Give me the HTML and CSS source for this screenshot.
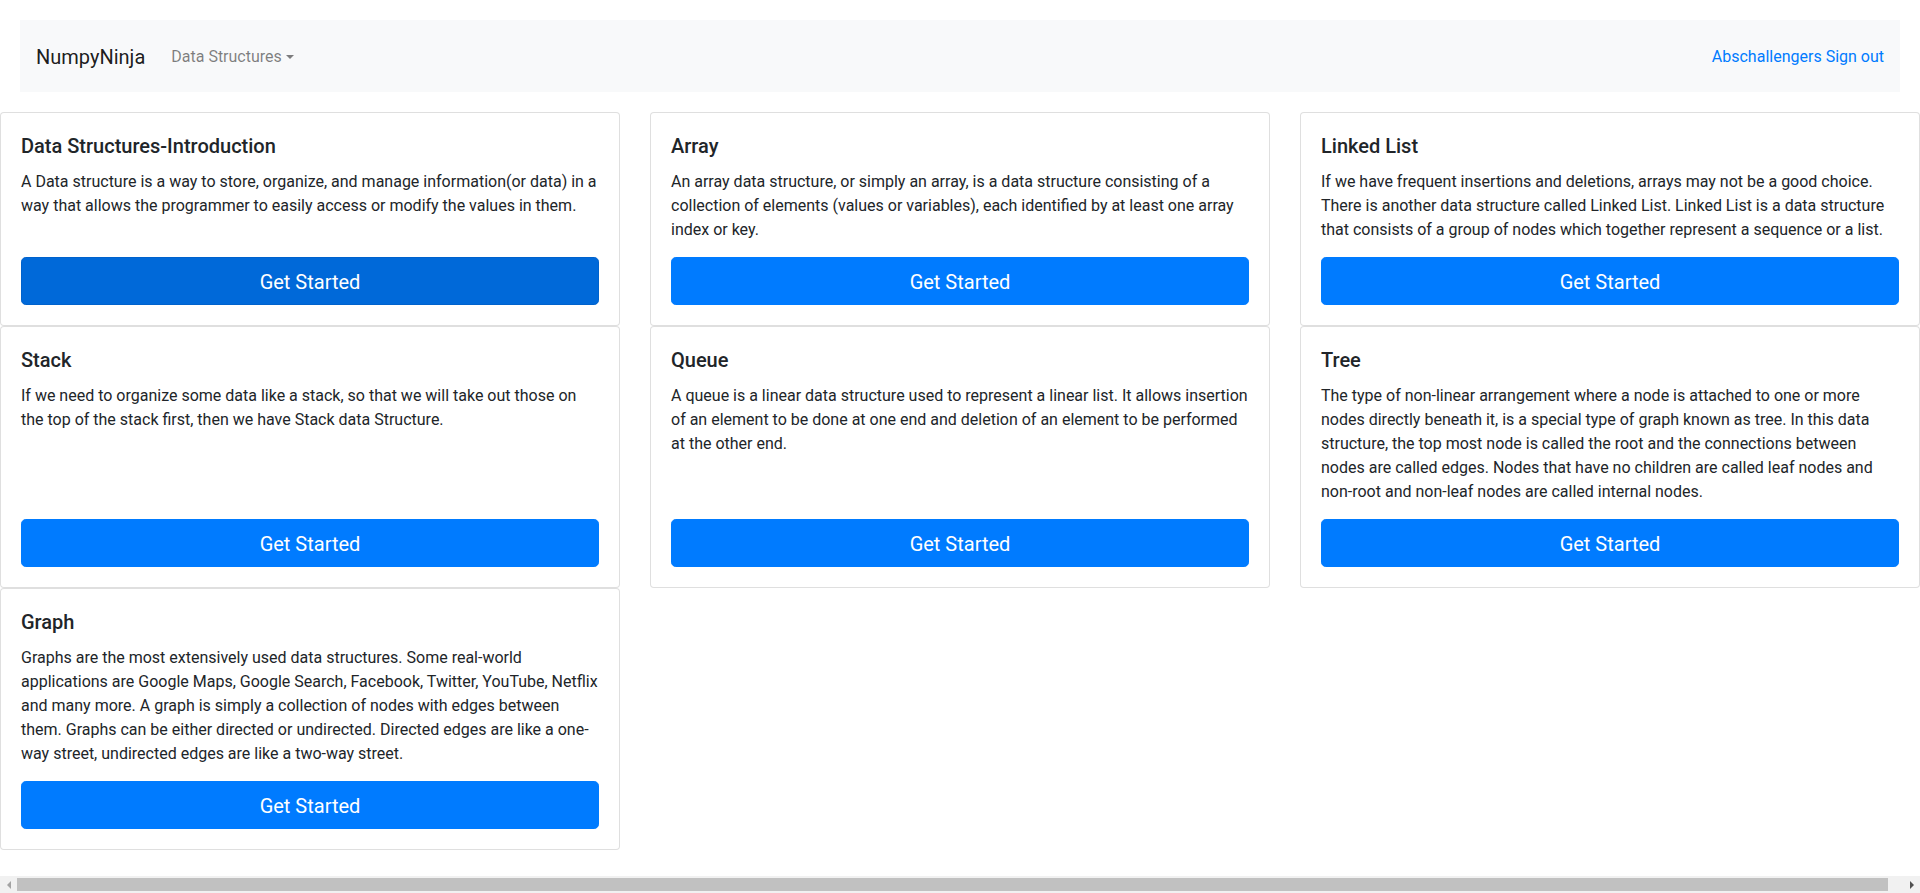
FILE: index.html
```html
<!DOCTYPE html>
<html lang="en">
<head>
<meta charset="utf-8">
<title>NumpyNinja</title>
<link rel="stylesheet" href="styles.css">
</head>
<body>
<nav class="navbar">
  <a class="brand" href="#">NumpyNinja</a>
  <a class="nav-link dropdown-toggle" href="#">Data Structures</a>
  <div class="nav-right">
    <a class="user-link" href="#">Abschallengers</a>
    <a class="user-link" href="#">Sign out</a>
  </div>
</nav>

<main class="cards">
  <div class="card">
    <div class="card-body">
      <h5 class="card-title">Data Structures-Introduction</h5>
      <p class="card-text">A Data structure is a way to store, organize, and manage information(or data) in a way that allows the programmer to easily access or modify the values in them.</p>
      <a href="#" class="btn btn-hover">Get Started</a>
    </div>
  </div>
  <div class="card">
    <div class="card-body">
      <h5 class="card-title">Array</h5>
      <p class="card-text">An array data structure, or simply an array, is a data structure consisting of a collection of elements (values or variables), each identified by at least one array index or key.</p>
      <a href="#" class="btn">Get Started</a>
    </div>
  </div>
  <div class="card">
    <div class="card-body">
      <h5 class="card-title">Linked List</h5>
      <p class="card-text">If we have frequent insertions and deletions, arrays may not be a good choice. There is another data structure called Linked List. Linked List is a data structure that consists of a group of nodes which together represent a sequence or a list.</p>
      <a href="#" class="btn">Get Started</a>
    </div>
  </div>
  <div class="card">
    <div class="card-body">
      <h5 class="card-title">Stack</h5>
      <p class="card-text">If we need to organize some data like a stack, so that we will take out those on the top of the stack first, then we have Stack data Structure.</p>
      <a href="#" class="btn">Get Started</a>
    </div>
  </div>
  <div class="card">
    <div class="card-body">
      <h5 class="card-title">Queue</h5>
      <p class="card-text">A queue is a linear data structure used to represent a linear list. It allows insertion of an element to be done at one end and deletion of an element to be performed at the other end.</p>
      <a href="#" class="btn">Get Started</a>
    </div>
  </div>
  <div class="card">
    <div class="card-body">
      <h5 class="card-title">Tree</h5>
      <p class="card-text">The type of non-linear arrangement where a node is attached to one or more nodes directly beneath it, is a special type of graph known as tree. In this data structure, the top most node is called the root and the connections between nodes are called edges. Nodes that have no children are called leaf nodes and non-root and non-leaf nodes are called internal nodes.</p>
      <a href="#" class="btn">Get Started</a>
    </div>
  </div>
  <div class="card">
    <div class="card-body">
      <h5 class="card-title">Graph</h5>
      <p class="card-text">Graphs are the most extensively used data structures. Some real-world applications are Google Maps, Google Search, Facebook, Twitter, YouTube, Netflix and many more. A graph is simply a collection of nodes with edges between them. Graphs can be either directed or undirected. Directed edges are like a one-way street, undirected edges are like a two-way street.</p>
      <a href="#" class="btn">Get Started</a>
    </div>
  </div>
</main>

<div class="scrollbar" aria-hidden="true">
  <div class="sb-btn"><span class="arrow-left"></span></div>
  <div class="sb-track"><div class="sb-thumb"></div></div>
  <div class="sb-btn"><span class="arrow-right"></span></div>
</div>
</body>
</html>
```
FILE: styles.css
```css
html, body {
  margin: 0;
  padding: 0;
}
body {
  font-family: Roboto, "Liberation Sans", sans-serif;
  font-size: 16px;
  line-height: 1.5;
  color: #212529;
  background: #fff;
  overflow: hidden;
  height: 893px;
}
a {
  text-decoration: none;
}

/* navbar */
.navbar {
  margin: 20px 20px 0;
  height: 72px;
  box-sizing: border-box;
  padding: 2px 16px 0;
  background: #f8f9fa;
  display: flex;
  align-items: center;
}
.brand {
  font-size: 20px;
  line-height: 30px;
  color: rgba(0, 0, 0, 0.9);
  margin-right: 18px;
}
.nav-link {
  padding: 8px;
  color: rgba(0, 0, 0, 0.5);
  font-size: 16px;
}
.dropdown-toggle::after {
  content: "";
  display: inline-block;
  margin-left: 4px;
  vertical-align: 3px;
  border-top: 4.8px solid;
  border-right: 4.8px solid transparent;
  border-left: 4.8px solid transparent;
  border-bottom: 0;
}
.nav-right {
  margin-left: auto;
  display: flex;
  gap: 4px;
}
.user-link {
  color: #007bff;
}

/* cards */
.cards {
  margin-top: 20px;
  display: grid;
  grid-template-columns: repeat(3, 620px);
  column-gap: 30px;
  align-items: stretch;
}
.card {
  border: 1px solid rgba(0, 0, 0, 0.125);
  border-radius: 4px;
  background: #fff;
  display: flex;
  flex-direction: column;
}
.card-body {
  flex: 1;
  padding: 20px;
  display: flex;
  flex-direction: column;
}
.card-title {
  margin: 0 0 12px;
  padding-top: 1px;
  font-size: 20px;
  font-weight: 500;
  line-height: 1.2;
}
.card-text {
  margin: 0 0 15px;
}
.btn {
  margin-top: auto;
  display: block;
  box-sizing: border-box;
  height: 48px;
  padding: 9px 16px 7px;
  font-size: 20px;
  line-height: 30px;
  text-align: center;
  color: #fff;
  background: #007bff;
  border: 1px solid #007bff;
  border-radius: 4.8px;
}
.btn-hover {
  background: #0069d9;
  border-color: #0062cc;
}

/* horizontal scrollbar (drawn over the page bottom) */
.scrollbar {
  position: fixed;
  left: 0;
  right: 0;
  bottom: 0;
  height: 17px;
  background: #f1f1f1;
  display: flex;
}
.sb-btn {
  width: 17px;
  display: flex;
  align-items: center;
  justify-content: center;
}
.arrow-left {
  width: 0;
  height: 0;
  border-top: 4px solid transparent;
  border-bottom: 4px solid transparent;
  border-right: 4px solid #a3a3a3;
}
.arrow-right {
  width: 0;
  height: 0;
  border-top: 4px solid transparent;
  border-bottom: 4px solid transparent;
  border-left: 4px solid #505050;
}
.sb-track {
  flex: 1;
  padding: 2px 15px 2px 0;
}
.sb-thumb {
  height: 13px;
  background: #c1c1c1;
}
```
